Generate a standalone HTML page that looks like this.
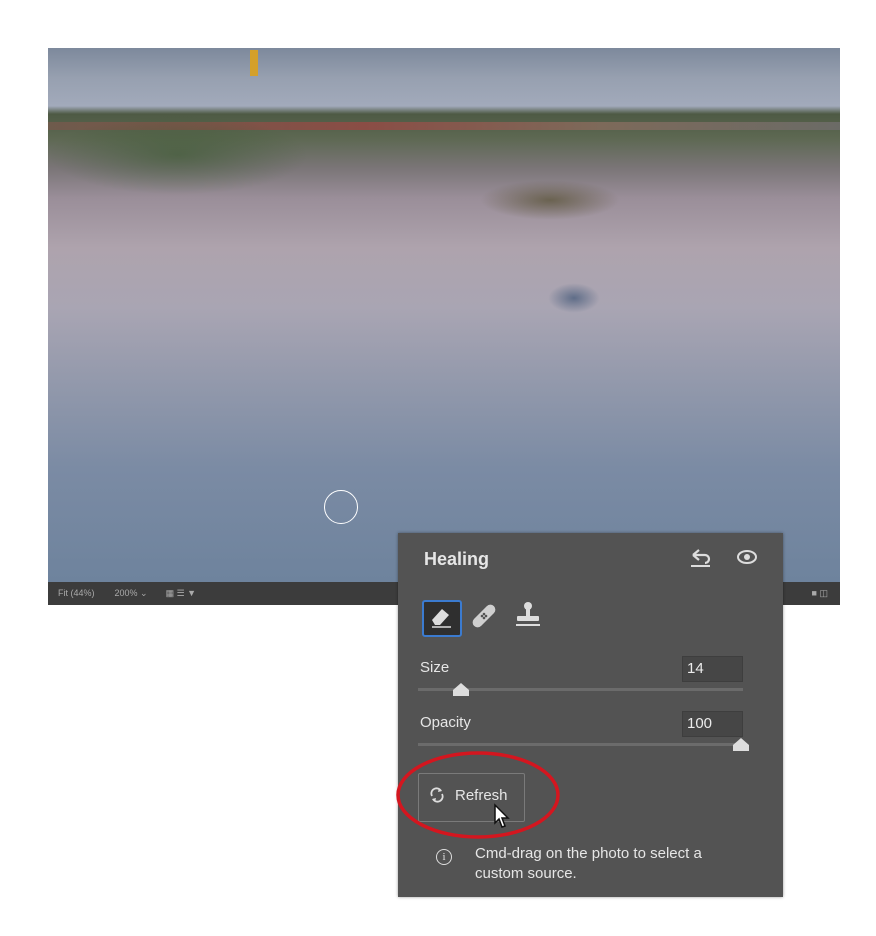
<!DOCTYPE html>
<html><head><style>
body{margin:0;width:876px;height:936px;background:#fff;position:relative;overflow:hidden;font-family:"Liberation Sans",sans-serif}
.photo{position:absolute;left:48px;top:48px;width:792px;height:534px;
background:
linear-gradient(180deg,#7d899c 0px,#97a0b0 30px,#a2aabb 58px,#4e5a44 66px,#5d6852 90px,#7a7577 120px,#9a8e99 150px,#aea3ad 200px,#a9a5b3 260px,#9198ab 340px,#7b8ba4 420px,#6e839d 534px);}
.band{position:absolute;left:48px;top:122px;width:792px;height:8px;background:linear-gradient(90deg,#6e5b4c,#8a4d45 40%,#7d6a5a 70%,#6b6b66)}
.bar{position:absolute;left:48px;top:582px;width:792px;height:23px;background:#3c3c3c;color:#aaa;font-size:9px;line-height:23px}
.panel{position:absolute;left:398px;top:533px;width:385px;height:364px;background:#535353;box-shadow:0 0 3px rgba(0,0,0,.4);color:#e6e6e6}
.t{position:absolute;font-size:15px}
.box{position:absolute;background:#464646;border:1px solid #3e3e3e;font-size:15px;color:#ececec;padding-left:4px;box-sizing:border-box;line-height:24px}
.track{position:absolute;height:3px;background:#6b6b6b;left:20px;width:325px}
</style></head><body>
<div class="photo"></div>
<div class="band"></div>
<div style="position:absolute;left:48px;top:115px;width:260px;height:80px;background:radial-gradient(ellipse,rgba(60,90,50,.6),transparent 70%)"></div>
<div style="position:absolute;left:250px;top:50px;width:8px;height:26px;background:#d4a02a"></div>
<div style="position:absolute;left:480px;top:180px;width:140px;height:40px;background:radial-gradient(ellipse,#6a6250,transparent 70%)"></div>
<div style="position:absolute;left:548px;top:283px;width:52px;height:30px;background:radial-gradient(ellipse,#5f6d88,transparent 70%)"></div>
<div style="position:absolute;left:324px;top:490px;width:34px;height:34px;border:1.5px solid #fff;border-radius:50%;box-sizing:border-box"></div>
<div class="bar"><span style="margin-left:10px">Fit (44%)</span><span style="margin-left:20px">200% ⌄</span><span style="margin-left:18px">▦ ☰ ▼</span><span style="position:absolute;right:12px">■ ◫</span></div>
<div class="panel">
<div class="t" style="left:26px;top:16px;font-weight:bold;font-size:18px">Healing</div>
<svg style="position:absolute;left:290px;top:14px" width="26" height="22" viewBox="0 0 26 22"><path d="M5 8 L11 3 M5 8 L11 13 M5 8 H17 A4 4 0 0 1 17 16" stroke="#ddd" stroke-width="2.2" fill="none"/><path d="M3 19 H22" stroke="#ddd" stroke-width="2"/></svg>
<svg style="position:absolute;left:338px;top:16px" width="22" height="16" viewBox="0 0 22 16"><ellipse cx="11" cy="8" rx="9" ry="6" stroke="#ddd" stroke-width="2" fill="none"/><circle cx="11" cy="8" r="3" fill="#ddd"/></svg>
<div style="position:absolute;left:24px;top:67px;width:36px;height:33px;border:2px solid #3b7bd0;border-radius:3px;background:#2f2f2f"></div>
<svg style="position:absolute;left:28px;top:70px" width="30" height="28" viewBox="0 0 30 28"><path d="M6 17 L16 6 L23 12 L14 22 L9 22 Z" fill="#ddd"/><path d="M6 24 H25" stroke="#ddd" stroke-width="1.5"/></svg>
<svg style="position:absolute;left:72px;top:68px" width="28" height="30" viewBox="0 0 28 30"><rect x="9" y="1" width="10" height="28" rx="5" fill="#cfcfcf" transform="rotate(45 14 15)"/><circle cx="12" cy="15" r="1.3" fill="#535353"/><circle cx="16" cy="15" r="1.3" fill="#535353"/><circle cx="14" cy="13" r="1.3" fill="#535353"/><circle cx="14" cy="17" r="1.3" fill="#535353"/></svg>
<svg style="position:absolute;left:115px;top:68px" width="30" height="30" viewBox="0 0 30 30"><circle cx="15" cy="5" r="4" fill="#ddd"/><rect x="13" y="8" width="4" height="8" fill="#ddd"/><rect x="4" y="15" width="22" height="5" rx="1" fill="#ddd"/><rect x="3" y="23" width="24" height="2" fill="#ddd"/></svg>
<div class="t" style="left:22px;top:126px">Size</div>
<div class="box" style="left:284px;top:123px;width:61px;height:26px">14</div>
<div class="track" style="top:155px"></div>
<svg style="position:absolute;left:54px;top:148px" width="18" height="16"><path d="M1 15 V9 L9 2 L17 9 V15 Z" fill="#ddd"/></svg>
<div class="t" style="left:22px;top:181px">Opacity</div>
<div class="box" style="left:284px;top:178px;width:61px;height:26px">100</div>
<div class="track" style="top:210px"></div>
<svg style="position:absolute;left:334px;top:203px" width="18" height="16"><path d="M1 15 V9 L9 2 L17 9 V15 Z" fill="#ddd"/></svg>
<div style="position:absolute;left:20px;top:240px;width:107px;height:49px;border:1.5px solid #7a7a7a;border-radius:2px;box-sizing:border-box"></div>
<svg style="position:absolute;left:31px;top:254px" width="16" height="16" viewBox="0 0 16 16"><path d="M3 9 A5 5 0 0 1 12 4 M13 7 A5 5 0 0 1 4 12" stroke="#ddd" stroke-width="1.8" fill="none"/><path d="M10 1 L13 4 L9 5 Z M6 15 L3 12 L7 11 Z" fill="#ddd"/></svg>
<div class="t" style="left:57px;top:254px">Refresh</div>
<svg style="position:absolute;left:95px;top:270px" width="18" height="28" viewBox="0 0 18 28"><path d="M2 2 V20 L6 16 L9 24 L12 23 L9 15 L15 15 Z" fill="#fff" stroke="#111" stroke-width="1.5"/></svg>
<div style="position:absolute;left:38px;top:316px;width:14px;height:14px;border:1.5px solid #ddd;border-radius:50%;font-size:11px;text-align:center;line-height:14px;font-family:'Liberation Serif',serif">i</div>
<div class="t" style="left:77px;top:311px;line-height:20px;width:275px">Cmd-drag on the photo to select a custom source.</div>
</div>
<svg style="position:absolute;left:396px;top:750px" width="166" height="90"><ellipse cx="82" cy="45" rx="80" ry="42" stroke="#d4161f" stroke-width="3.5" fill="none"/></svg>
</body></html>
